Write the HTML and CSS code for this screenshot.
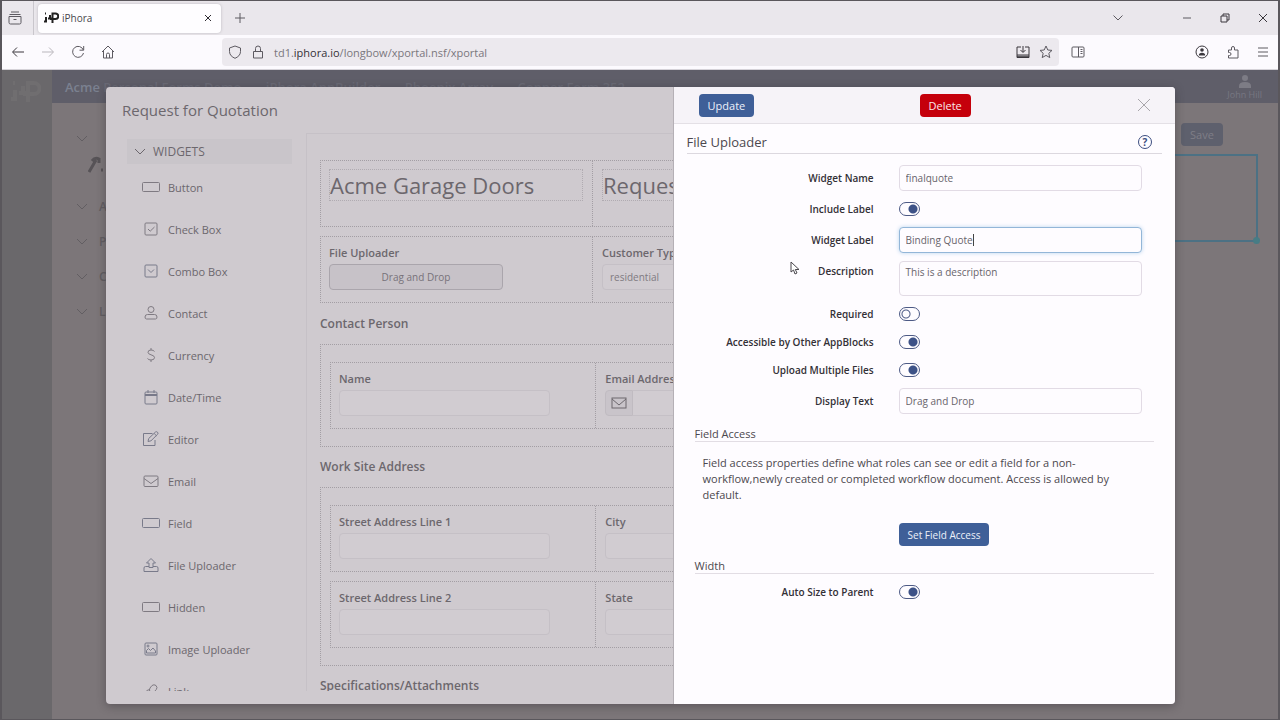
FILE: index.html
```html
<!DOCTYPE html>
<html lang="en">
<head>
    <meta charset="UTF-8">
    <meta name="viewport" content="width=device-width, initial-scale=1.0">
    <title>iPhora</title>
    <link rel="stylesheet" href="styles.css">
</head>
<body>
    <!-- Browser tabs -->
    <div class="tab-bar">
        <button class="chrome-btn tab-overview" aria-label="Tab overview">
            <svg width="14" height="14" viewBox="0 0 14 14"><path d="M3 1h8M1.500 3.500h11M1 5.500h12v6a1.500 1.500 0 0 1-1.500 1.500h-9A1.500 1.500 0 0 1 1 11.500zM5.500 8.500h3"/></svg>
        </button>
        <div class="tab">
            <svg class="logo" width="15" height="12" viewBox="0 0 15 12"><path d="M1 1.500h1M2 5v4M0 9.500h3M4 6.500h4M6 3v4M8.500 11V1.500h3a2.500 2.500 0 0 1 0 5.500H6"/></svg>
            <span class="tab-title">iPhora</span>
            <button class="chrome-btn tab-close" aria-label="Close tab">
                <svg width="8" height="8" viewBox="0 0 8 8"><path d="M1 1l6 6M7 1L1 7"/></svg>
            </button>
        </div>
        <button class="chrome-btn new-tab" aria-label="New tab">
            <svg width="12" height="12" viewBox="0 0 12 12"><path d="M6 1v10M1 6h10"/></svg>
        </button>
        <div class="window-btns">
            <button class="chrome-btn list-tabs" aria-label="List tabs"><svg width="12" height="12" viewBox="0 0 12 12"><path d="M1.500 3.500L6 8l4.500-4.500"/></svg></button>
            <button class="chrome-btn" aria-label="Minimize"><svg width="10" height="10" viewBox="0 0 10 10"><path d="M1 5h8"/></svg></button>
            <button class="chrome-btn" aria-label="Restore"><svg class="dark" width="10" height="10" viewBox="0 0 10 10"><path d="M1 3h6v6H1zM3 3V1h6v6H7"/></svg></button>
            <button class="chrome-btn" aria-label="Close"><svg class="dark" width="10" height="10" viewBox="0 0 10 10"><path d="M1 1l8 8M9 1L1 9"/></svg></button>
        </div>
    </div>

    <!-- Navigation toolbar -->
    <div class="toolbar">
        <div class="nav-btns">
            <button class="chrome-btn" aria-label="Back"><svg class="dark" width="14" height="14" viewBox="0 0 14 14"><path d="M13 7H2M6 2.500L1.500 7 6 11.500"/></svg></button>
            <button class="chrome-btn" aria-label="Forward"><svg class="faded" width="14" height="14" viewBox="0 0 14 14"><path d="M1 7h11M8 2.500L12.500 7 8 11.500"/></svg></button>
            <button class="chrome-btn" aria-label="Reload"><svg width="14" height="14" viewBox="0 0 14 14"><path d="M12.300 5A5.500 5.500 0 1 0 12.500 8M12.700 1v4.200H8.500"/></svg></button>
            <button class="chrome-btn" aria-label="Home"><svg width="14" height="14" viewBox="0 0 14 14"><path d="M1 7l6-6 6 6M2.500 6v7h9V6M5.500 13V9.500a1.500 1.500 0 0 1 3 0V13"/></svg></button>
        </div>
        <div class="url-bar">
            <svg width="14" height="14" viewBox="0 0 14 14"><path d="M7 1l5.500 2v3.500C12.500 10 10 12 7 13.300 4 12 1.500 10 1.500 6.500V3z"/></svg>
            <svg width="14" height="14" viewBox="0 0 14 14"><path d="M2.500 6.500h9v6.500h-9zM4.500 6.500V3.500a2.500 2.500 0 0 1 5 0v3"/></svg>
            <span class="url">td1.<b>iphora.io</b>/longbow/xportal.nsf/xportal</span>
            <svg class="dark" width="14" height="14" viewBox="0 0 14 14"><path d="M5 2H1v10.500h12V2H9M1 10h12M1 11.300h12M7 1v6M4.500 5L7 7.500 9.500 5"/></svg>
            <svg width="14" height="14" viewBox="0 0 14 14"><path d="M7 1l1.800 4 4.200.4-3.200 2.900 1 4.300L7 10.400l-3.800 2.200 1-4.300L1 5.400 5.200 5z"/></svg>
        </div>
        <button class="chrome-btn sidebar-btn" aria-label="Sidebar"><svg width="14" height="12" viewBox="0 0 14 12"><path d="M2 1h10a1 1 0 0 1 1 1v8a1 1 0 0 1-1 1H2a1 1 0 0 1-1-1V2a1 1 0 0 1 1-1zM7.500 1v10M9.500 3.500h2M9.500 5.500h2M9.500 7.500h2"/></svg></button>
        <div class="menu-btns">
            <button class="chrome-btn" aria-label="Account"><svg class="dark" width="14" height="14" viewBox="0 0 14 14"><circle cx="7" cy="7" r="6"/><circle class="solid" cx="7" cy="5" r="1.800"/><path class="solid" d="M3.800 10.500a3.200 2.800 0 0 1 6.400 0z"/></svg></button>
            <button class="chrome-btn" aria-label="Extensions"><svg width="14" height="14" viewBox="0 0 14 14"><path d="M2.500 5h3V3a1.500 1.500 0 0 1 3 0v2h3.500v8H2.500v-2.500h1a1.500 1.500 0 0 0 0-3h-1z"/></svg></button>
            <button class="chrome-btn" aria-label="Menu"><svg width="12" height="12" viewBox="0 0 12 12"><path d="M1 2h10M1 6h10M1 10h10"/></svg></button>
        </div>
    </div>

    <div class="app">
        <!-- Dimmed portal behind the dialog -->
        <nav class="rail">
            <svg width="30" height="24" viewBox="0 0 15 12"><path d="M1 1.500h1M2 5v4M0 9.500h3M4 6.500h4M6 3v4M8.500 11V1.500h3a2.500 2.500 0 0 1 0 5.500H6"/></svg>
        </nav>
        <div class="portal">
            <header class="portal-header">
                <span class="portal-title"><span class="portal-name">Acme</span> Personal Forms Demo &nbsp; - &nbsp; iPhora AppBuilder &nbsp; - &nbsp; Phoenix Array &nbsp; - &nbsp; Copper Form 352</span>
                <div class="user">
                    <svg width="14" height="14" viewBox="0 0 14 14"><circle cx="7" cy="4" r="3"/><path d="M1 14v-2q0-4 6-4t6 4v2z"/></svg>
                    <span>John Hill</span>
                </div>
            </header>
            <div class="portal-body">
                <ul class="tree">
                    <li><svg width="12" height="8" viewBox="0 0 12 8"><path d="M1 1l5 5 5-5"/></svg></li>
                    <li class="tool"><svg width="16" height="18" viewBox="0 0 16 18"><path d="M1 16L8 4M4 5q3-4 7-2v4M13 14h2" stroke-width="3"/></svg></li>
                    <li><svg width="12" height="8" viewBox="0 0 12 8"><path d="M1 1l5 5 5-5"/></svg>A</li>
                    <li><svg width="12" height="8" viewBox="0 0 12 8"><path d="M1 1l5 5 5-5"/></svg>P</li>
                    <li><svg width="12" height="8" viewBox="0 0 12 8"><path d="M1 1l5 5 5-5"/></svg>C</li>
                    <li><svg width="12" height="8" viewBox="0 0 12 8"><path d="M1 1l5 5 5-5"/></svg>L</li>
                </ul>
                <div class="stage">
                    <button class="save-btn">Save</button>
                    <div class="selection"><i class="handle"></i></div>
                </div>
            </div>
        </div>

        <!-- Form designer dialog -->
        <section class="dialog">
            <h1 class="dialog-title">Request for Quotation</h1>
            <div class="designer">
                <aside class="widgets">
                    <h2 class="widgets-head"><svg width="12" height="8" viewBox="0 0 12 8"><path d="M1 1l5 5 5-5"/></svg>WIDGETS</h2>
                    <ul class="widget-list">
                        <li><svg width="20" height="16" viewBox="0 0 20 16"><rect x="1.500" y="3.500" width="17" height="9" rx="1"/></svg>Button</li>
                        <li><svg width="20" height="16" viewBox="0 0 20 16"><rect x="4" y="2" width="12" height="12" rx="1"/><path d="M7 8l2.200 2.200L13.500 6"/></svg>Check Box</li>
                        <li class="blue"><svg width="20" height="16" viewBox="0 0 20 16"><rect x="4" y="2" width="12" height="12" rx="1"/><path d="M7 6.500l3 3 3-3"/></svg>Combo Box</li>
                        <li><svg width="20" height="16" viewBox="0 0 20 16"><circle cx="10" cy="4.500" r="3"/><path d="M6.500 9.500h7q2.500 0 2.500 2.500 0 2-1.500 2h-9Q4 14 4 12q0-2.500 2.500-2.500z"/></svg>Contact</li>
                        <li><svg width="20" height="16" viewBox="0 0 20 16"><path d="M13.500 4.500Q12.500 3 10 3 7 3 7 5.300 7 7 10 7.800q3.500.8 3.500 2.800 0 2.400-3.500 2.400-2.500 0-3.500-1.500M10 1v2M10 13v2"/></svg>Currency</li>
                        <li class="blue"><svg width="20" height="16" viewBox="0 0 20 16"><rect x="4" y="3" width="12" height="12" rx="1"/><path d="M4 6.500h12M4 5.500h12M7 1v3M13 1v3"/></svg>Date/Time</li>
                        <li class="blue"><svg width="20" height="16" viewBox="0 0 20 16"><path d="M11.500 2.500H2.500v12h11.500V9M7 10.500l.7-3L14.500 1q1-.7 2 .2 1 1 .2 2L10 9.800zM13.200 2.500l2.300 2.300"/></svg>Editor</li>
                        <li><svg width="20" height="16" viewBox="0 0 20 16"><rect x="3" y="3" width="14" height="10.500" rx="1"/><path d="M3 5.500l7 5 7-5"/></svg>Email</li>
                        <li class="blue"><svg width="20" height="16" viewBox="0 0 20 16"><rect x="1.500" y="3.500" width="17" height="9" rx="1"/></svg>Field</li>
                        <li class="blue"><svg width="20" height="16" viewBox="0 0 20 16"><path d="M8 10.500V6H5.500L10 1.500 14.500 6H12v4.500zM8 9.500H4.500Q3 9.500 3 11v3.500h14V11q0-1.500-1.500-1.500H12"/></svg>File Uploader</li>
                        <li><svg width="20" height="16" viewBox="0 0 20 16"><rect x="1.500" y="3.500" width="17" height="9" rx="1"/></svg>Hidden</li>
                        <li class="blue"><svg width="20" height="16" viewBox="0 0 20 16"><rect x="4" y="2" width="12" height="12" rx="1"/><path d="M5.500 12V9.500l2-2 2 2L12 7l2.500 3v2z"/><circle cx="7" cy="5" r="1"/></svg>Image Uploader</li>
                        <li><svg width="20" height="16" viewBox="0 0 20 16"><path d="M9.500 9Q7.500 7 9 5l2-2.500q2-1.500 4 0 1.800 2 .3 4L13 9q-1.500 1.200-3 .4M9 7Q7 6 5 8.500l-1 1Q2.500 11.500 4 13.500q2 1.500 4 0l1-1"/></svg>Link</li>
                    </ul>
                </aside>

                <div class="canvas">
                    <div class="row">
                        <div class="cell"><div class="heading-box">Acme Garage Doors</div></div>
                        <div class="cell"><div class="heading-box">Request</div></div>
                        <div class="cell"></div>
                    </div>
                    <div class="row">
                        <div class="cell">
                            <span class="cell-label">File Uploader</span>
                            <button class="drop-btn">Drag and Drop</button>
                        </div>
                        <div class="cell">
                            <label class="cell-label" for="ctype">Customer Type</label>
                            <input class="cell-input" id="ctype" type="text" value="residential">
                        </div>
                        <div class="cell"></div>
                    </div>

                    <h3 class="group-title">Contact Person</h3>
                    <div class="group">
                        <div class="row">
                            <div class="cell">
                                <label class="cell-label" for="cname">Name</label>
                                <input class="cell-input" id="cname" type="text">
                            </div>
                            <div class="cell">
                                <label class="cell-label" for="cemail">Email Address</label>
                                <div class="addon">
                                    <span class="addon-icon"><svg width="16" height="12" viewBox="0 0 16 12"><rect x="1" y="1" width="14" height="10"/><path d="M1 2l7 6 7-6"/></svg></span>
                                    <input class="cell-input" id="cemail" type="text">
                                </div>
                            </div>
                            <div class="cell"></div>
                        </div>
                    </div>

                    <h3 class="group-title">Work Site Address</h3>
                    <div class="group">
                        <div class="row">
                            <div class="cell">
                                <label class="cell-label" for="street1">Street Address Line 1</label>
                                <input class="cell-input" id="street1" type="text">
                            </div>
                            <div class="cell">
                                <label class="cell-label" for="city">City</label>
                                <input class="cell-input" id="city" type="text">
                            </div>
                            <div class="cell"></div>
                        </div>
                        <div class="row">
                            <div class="cell">
                                <label class="cell-label" for="street2">Street Address Line 2</label>
                                <input class="cell-input" id="street2" type="text">
                            </div>
                            <div class="cell">
                                <label class="cell-label" for="state">State</label>
                                <input class="cell-input" id="state" type="text">
                            </div>
                            <div class="cell"></div>
                        </div>
                    </div>

                    <h3 class="group-title">Specifications/Attachments</h3>
                </div>
            </div>

            <!-- Widget properties panel -->
            <form class="panel">
                <div class="panel-bar">
                    <button type="button" class="btn">Update</button>
                    <button type="button" class="btn btn-danger">Delete</button>
                    <button type="button" class="panel-close" aria-label="Close panel"><svg width="14" height="14" viewBox="0 0 14 14"><path d="M1 1l12 12M13 1L1 13"/></svg></button>
                </div>
                <div class="panel-body">
                    <div class="panel-head">
                        <h2>File Uploader</h2>
                        <button type="button" class="help-btn" aria-label="Help">?</button>
                    </div>

                    <div class="fields">
                        <label for="wname">Widget Name</label>
                        <input class="text-input" id="wname" type="text" value="finalquote">
                        <label for="inclabel">Include Label</label>
                        <input class="toggle" id="inclabel" type="checkbox" checked>
                        <label for="wlabel">Widget Label</label>
                        <div class="active-field">
                            <input class="text-input active" id="wlabel" type="text" value="Binding Quote">
                            <i class="caret"></i>
                        </div>
                        <label class="desc-label" for="desc">Description</label>
                        <textarea class="text-input" id="desc">This is a description</textarea>
                        <label for="required">Required</label>
                        <input class="toggle" id="required" type="checkbox">
                        <label for="access">Accessible by Other AppBlocks</label>
                        <input class="toggle" id="access" type="checkbox" checked>
                        <label for="multi">Upload Multiple Files</label>
                        <input class="toggle" id="multi" type="checkbox" checked>
                        <label for="display">Display Text</label>
                        <input class="text-input" id="display" type="text" value="Drag and Drop">
                    </div>

                    <h3 class="sub-head">Field Access</h3>
                    <p class="note">Field access properties define what roles can see or edit a field for a non-workflow,newly created or completed workflow document. Access is allowed by default.</p>
                    <div class="fields">
                        <button type="button" class="btn field-btn">Set Field Access</button>
                    </div>

                    <h3 class="sub-head">Width</h3>
                    <div class="fields">
                        <label for="autosize">Auto Size to Parent</label>
                        <input class="toggle" id="autosize" type="checkbox" checked>
                    </div>
                </div>
            </form>
        </section>

        <svg class="cursor" width="10" height="14" viewBox="0 0 10 14"><path d="M1 1v10l2.500-2 1.500 4 2-1-1.700-3.500H9z"/></svg>
    </div>
</body>
</html>
```

FILE: styles.css
```css
* {
    box-sizing: border-box;
}

body {
    margin: 0;
    height: 100vh;
    display: flex;
    flex-direction: column;
    overflow: hidden;
    border: 1px solid #5a575c;
    border-width: 1px 2px 1px 2px;
    font-family: "Open Sans", "Noto Sans", sans-serif;
    font-size: 12px;
    color: #4c484e;
    background: #7c7679;
}

h1, h2, h3, p, ul {
    margin: 0;
    padding: 0;
    font-weight: 400;
}

ul {
    list-style: none;
}

button, input, textarea {
    font-family: inherit;
}

svg {
    fill: none;
    stroke: currentColor;
    flex: none;
}

.solid {
    fill: currentColor;
    stroke: none;
}

/* Browser chrome */
.chrome-btn {
    display: flex;
    padding: 0;
    border: 0;
    background: none;
    color: #5d5a61;
}

.dark {
    color: #3a373d;
}

.faded {
    color: #b9b6bc;
}

.tab-bar {
    flex: none;
    height: 34px;
    display: flex;
    align-items: center;
    background: #eae7ec;
}

.tab-overview {
    align-items: center;
    height: 34px;
    padding: 0 11px 0 6px;
    border-right: 1px solid #c9c6cc;
}

.tab {
    display: flex;
    align-items: center;
    gap: 3px;
    width: 183px;
    height: 29px;
    margin-left: 4px;
    padding: 0 9px 0 6px;
    border-radius: 4px;
    background: #fefdff;
    box-shadow: 0 0 3px #bbb8be;
}

.logo {
    color: #222;
    stroke-width: 2;
}

.tab-title {
    flex: 1;
    font-size: 10px;
    color: #4a474d;
}

.tab-close {
    color: #2f2c32;
}

.new-tab {
    margin-left: 13px;
}

.window-btns {
    display: flex;
    align-items: center;
    gap: 28px;
    margin-left: auto;
    padding-right: 10px;
}

.list-tabs {
    margin-right: 30px;
}

.toolbar {
    flex: none;
    height: 35px;
    display: flex;
    align-items: center;
    background: #fcfafe;
    border-bottom: 1px solid #d5d2d8;
}

.nav-btns {
    display: flex;
    gap: 16px;
    width: 220px;
    padding-left: 9px;
}

.url-bar {
    flex: 1;
    display: flex;
    align-items: center;
    gap: 9px;
    height: 28px;
    padding: 0 6px;
    border-radius: 4px;
    background: #ece9ee;
    color: #5d5a61;
}

.url {
    flex: 1;
    font-size: 11px;
    color: #7a777d;
}

.url b {
    font-weight: 500;
    color: #333036;
}

.sidebar-btn {
    margin: 0 110px 0 12px;
}

.menu-btns {
    display: flex;
    align-items: center;
    gap: 17px;
    padding-right: 9px;
}

/* Portal behind the dialog */
.app {
    flex: 1;
    min-height: 0;
    position: relative;
    display: flex;
}

.rail {
    width: 50px;
    padding: 10px 9px;
    background: #6a686b;
    color: #706e70;
}

.rail svg {
    stroke-width: 2;
}

.portal {
    flex: 1;
    min-width: 0;
}

.portal-header {
    display: flex;
    justify-content: space-between;
    height: 33px;
    padding: 0 16px 0 13px;
    background: #5f5e69;
    line-height: 34px;
}

.portal-title {
    font-size: 13px;
    font-weight: 600;
    color: #6a6a76;
}

.portal-name {
    color: #7b8190;
}

.user {
    display: flex;
    flex-direction: column;
    align-items: center;
    padding-top: 4px;
    font-size: 9px;
    line-height: 13px;
    color: #777782;
}

.user svg {
    fill: #7d7c85;
    stroke: none;
}

.portal-body {
    display: flex;
    justify-content: space-between;
}

.tree {
    padding: 18px 0 0 24px;
    color: #625e62;
    font-weight: 600;
}

.tree li {
    display: flex;
    align-items: center;
    gap: 11px;
    height: 35px;
}

.tree .tool {
    height: 33px;
    padding-left: 12px;
    align-items: flex-start;
    color: #575357;
}

.stage {
    display: flex;
    flex-direction: column;
    align-items: flex-end;
    padding: 20px 20px 0 0;
}

.save-btn {
    width: 42px;
    height: 23px;
    margin-right: 35px;
    padding: 0;
    border: 0;
    border-radius: 4px;
    background: #5e606d;
    color: #7f7e87;
    font-size: 11px;
}

.selection {
    position: relative;
    width: 160px;
    height: 88px;
    margin-top: 8px;
    border: 2px solid #4c7184;
}

.handle {
    position: absolute;
    right: -4px;
    bottom: -4px;
    width: 7px;
    height: 7px;
    border-radius: 50%;
    background: #477c85;
}

/* Dialog */
.dialog {
    position: absolute;
    inset: 17px 103px 15px 104px;
    display: flex;
    flex-direction: column;
    overflow: hidden;
    padding-bottom: 13px;
    border-radius: 4px;
    background: #cfcacf;
    color: #6c676d;
}

.app::after {
    content: "";
    position: absolute;
    inset: 17px 103px 15px 104px;
    border-radius: 4px;
    box-shadow: 0 2px 10px rgba(40, 36, 42, 0.4);
    pointer-events: none;
}

.dialog-title {
    padding: 12px 16px 11px;
    font-size: 15px;
    line-height: 23px;
}

.designer {
    flex: 1;
    min-height: 0;
    display: flex;
}

.widgets {
    flex: none;
    width: 200px;
    padding: 6px 14px 0 21px;
    overflow: hidden;
}

.widgets-head {
    display: flex;
    align-items: center;
    gap: 7px;
    height: 25px;
    padding-left: 7px;
    background: #c9c5ca;
    font-size: 12px;
}

.widget-list {
    padding-top: 2px;
    font-size: 11px;
}

.widget-list li {
    display: flex;
    align-items: center;
    gap: 7px;
    height: 42px;
    padding-left: 14px;
}

.widget-list svg {
    color: #7f7a82;
}

.widget-list .blue svg {
    color: #797a8a;
}

.canvas {
    flex: 1;
    min-width: 0;
    margin-right: 27px;
    padding: 26px 13px 0;
    overflow: hidden;
    border: 1px solid #c6c1c7;
    border-width: 1px 0 0 1px;
}

.row {
    display: grid;
    grid-template-columns: repeat(3, 1fr);
    height: 67px;
    margin-bottom: 9px;
    border: 1px dotted #a39ea4;
}

.cell {
    min-width: 0;
    padding: 8px 9px 8px 8px;
}

.cell + .cell {
    padding-left: 9px;
    border-left: 1px dotted #a39ea4;
}

.heading-box {
    border: 1px dotted #b0abb1;
    font-size: 22px;
    line-height: 30px;
}

.cell-label {
    display: block;
    margin-bottom: 3px;
    font-size: 11px;
    font-weight: 600;
    line-height: 16px;
}

.drop-btn {
    display: block;
    width: 174px;
    height: 26px;
    padding: 0;
    border: 1px solid #aaa5ac;
    border-radius: 4px;
    background: #c7c2c8;
    color: #77727a;
    font-size: 10px;
}

.cell-input {
    display: block;
    width: 211px;
    height: 26px;
    padding: 0 7px;
    border: 1px solid #c5c0c6;
    border-radius: 4px;
    background: #d1ccd1;
    color: #7f7a81;
    font-size: 10px;
}

.addon {
    display: flex;
}

.addon-icon {
    display: flex;
    align-items: center;
    justify-content: center;
    width: 28px;
    border: 1px solid #c0bbc1;
    border-radius: 4px 0 0 4px;
    background: #c9c4ca;
}

.addon .cell-input {
    border-left: 0;
    border-radius: 0 4px 4px 0;
}

.group-title {
    padding: 2px 0 10px;
    font-size: 12px;
    font-weight: 600;
    line-height: 20px;
}

.group {
    margin-bottom: 8px;
    padding: 17px 9px 8px;
    border: 1px dotted #a39ea4;
}

/* Properties panel */
.panel {
    position: absolute;
    top: 0;
    right: 0;
    bottom: 0;
    width: 47%;
    background: #fefcff;
    border-left: 1px solid #b5b0b6;
    color: #4c484e;
}

.panel-bar {
    display: grid;
    grid-template-columns: 221px 1fr auto;
    align-items: center;
    height: 37px;
    padding: 0 24px 0 25px;
    background: #f6f3f8;
    border-bottom: 1px solid #e4e0e6;
}

.btn {
    justify-self: start;
    height: 23px;
    padding: 0 9px;
    border: 0;
    border-radius: 4px;
    background: #3f5f98;
    color: #edf1fa;
    font-size: 11px;
}

.btn-danger {
    background: #c5000b;
    color: #fbe9ea;
}

.panel-close {
    display: flex;
    padding: 0;
    border: 0;
    background: none;
    color: #a9a6ab;
}

.panel-body {
    padding: 7px 13px;
}

.panel-head {
    display: flex;
    justify-content: space-between;
    align-items: center;
    height: 23px;
    margin-bottom: 3px;
    padding-right: 10px;
    border-bottom: 1px solid #dcd8df;
}

.panel-head h2 {
    font-size: 13px;
}

.help-btn {
    width: 14px;
    height: 14px;
    padding: 0;
    border: 1px solid #3c4d80;
    border-radius: 50%;
    background: none;
    color: #3c4d80;
    font-size: 10px;
    font-weight: 700;
    line-height: 10px;
}

.fields {
    display: grid;
    grid-template-columns: 187px 1fr;
    column-gap: 25px;
    row-gap: 8px;
    align-items: center;
    padding: 8px 20px 0 0;
}

.fields label {
    text-align: right;
    font-size: 10px;
    font-weight: 600;
    line-height: 20px;
    color: #333036;
}

.fields .desc-label {
    align-self: start;
}

.text-input {
    display: block;
    width: 100%;
    height: 26px;
    padding: 0 6px;
    border: 1px solid #e2dbe5;
    border-radius: 4px;
    background: #fefcff;
    color: #68646b;
    font-size: 10px;
}

textarea.text-input {
    height: 35px;
    padding: 2px 6px;
    line-height: 16px;
    resize: none;
}

.active-field {
    position: relative;
}

.text-input.active {
    border-color: #93b6d8;
    box-shadow: 0 0 4px #bcd6ee;
}

.caret {
    position: absolute;
    top: 7px;
    left: 74px;
    width: 1px;
    height: 12px;
    background: #444;
}

.toggle {
    appearance: none;
    width: 21px;
    height: 14px;
    margin: 3px 0;
    border: 1px solid #4d5a85;
    border-radius: 8px;
    background: radial-gradient(circle at 6px 6px, #fefcff 3px, #4d5a85 4px, #4d5a85 4px, #fefcff 5px);
}

.toggle:checked {
    background: radial-gradient(circle at 13px 6px, #3d5287 4px, #fefcff 5px);
}

.sub-head {
    margin: 12px 8px 0;
    border-bottom: 1px solid #e2dde4;
    font-size: 11px;
    line-height: 15px;
}

.note {
    padding: 13px 16px 12px;
    font-size: 11px;
    line-height: 16px;
}

.field-btn {
    grid-column: 2;
    font-size: 10px;
}

.cursor {
    position: absolute;
    top: 191px;
    left: 788px;
    fill: #fff;
    stroke: #4a474d;
}
```
